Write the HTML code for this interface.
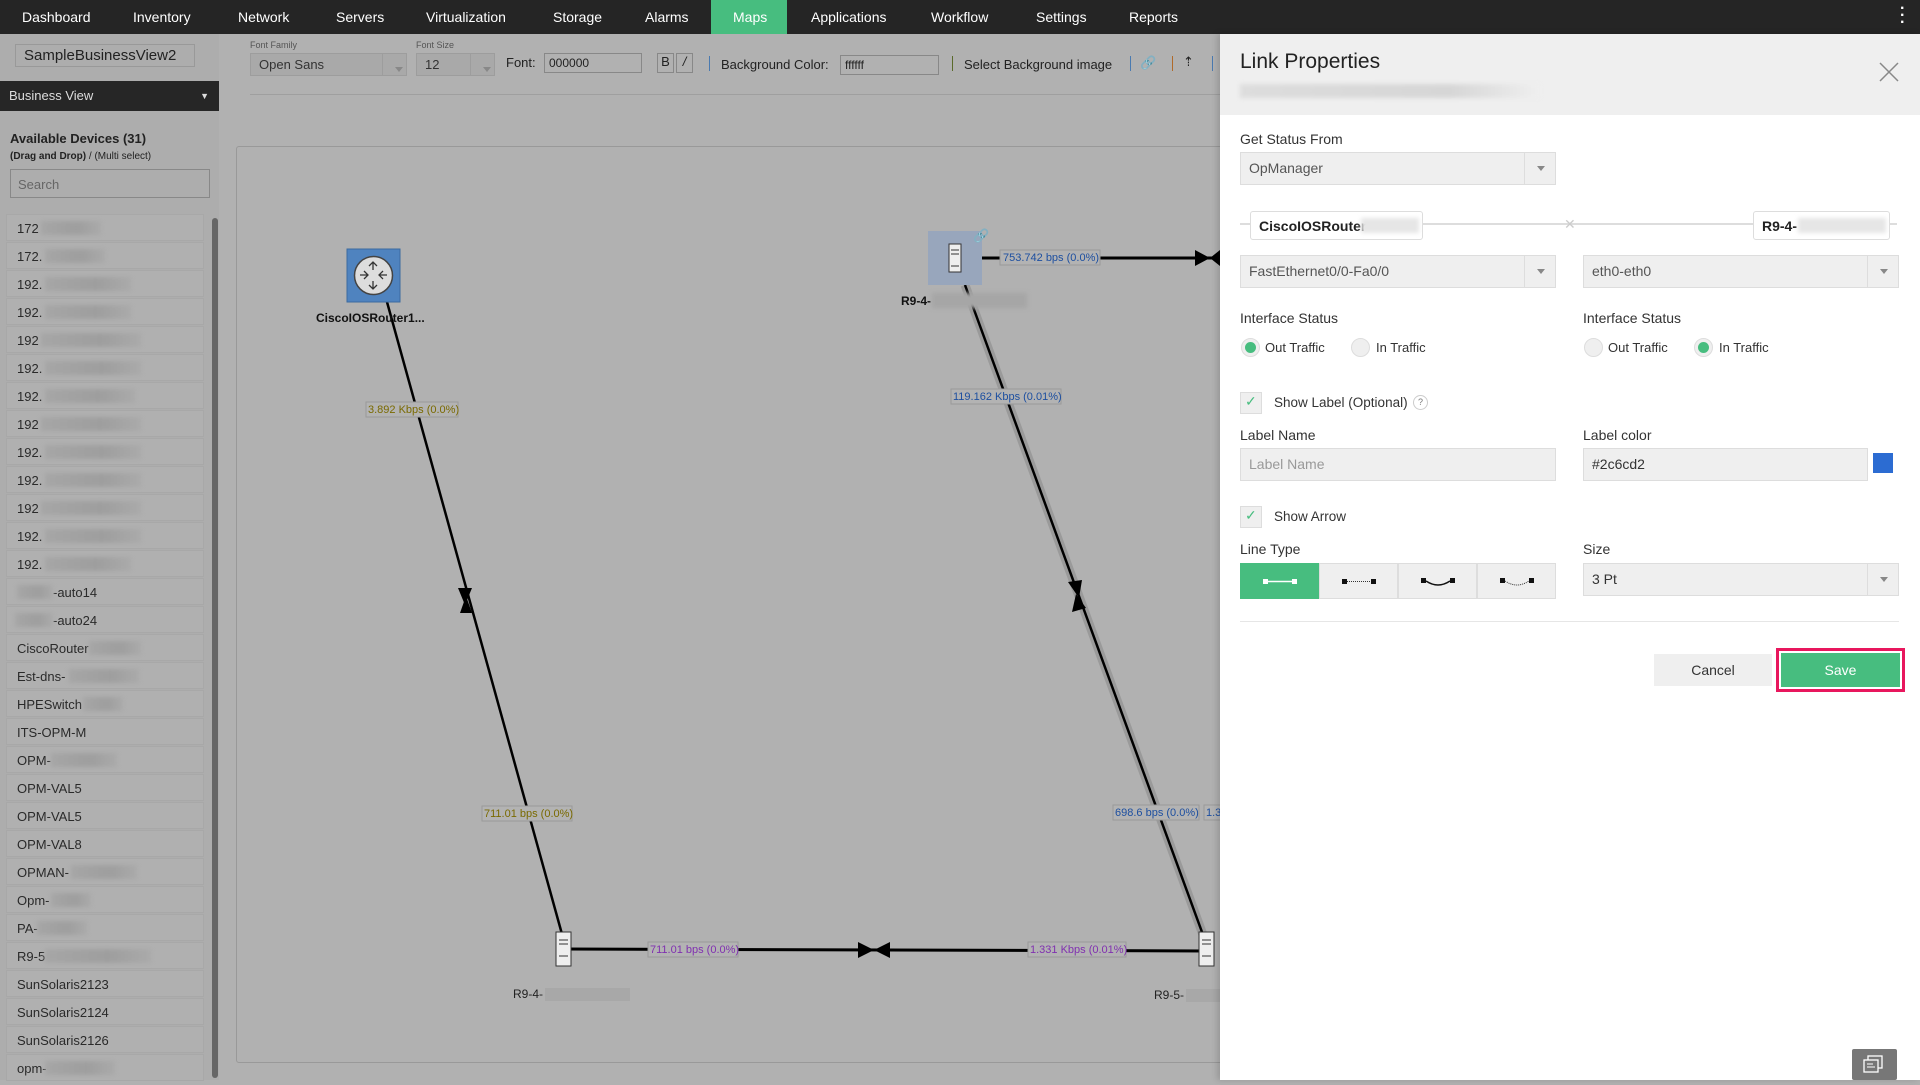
<!DOCTYPE html>
<html><head><meta charset="utf-8"><style>
*{margin:0;padding:0;box-sizing:border-box}
body{width:1920px;height:1080px;overflow:hidden;background:#b1b1b1;font-family:"Liberation Sans",sans-serif;position:relative;color:#222}
.a{position:absolute}
#nav{left:0;top:0;width:1920px;height:34px;background:#252525}
#nav span{position:absolute;top:9px;color:#fff;font-size:14px}
.blur{background:linear-gradient(90deg,#a6a6a6,#9e9e9e 60%,#aaa);filter:blur(2px)}
.li{position:absolute;left:6px;width:198px;height:27px;border:1px solid #a8a8a8;font-size:13px;color:#2a2a2a;padding:6px 0 0 10px;background:#b0b0b0}
.pl{position:absolute;font-size:14px;color:#333}
.sel{position:absolute;background:#efefef;border:1px solid #ddd;font-size:14px;color:#555;padding:7px 0 0 8px}
.sel i{position:absolute;right:0;top:0;bottom:0;width:31px;border-left:1px solid #ddd}
.sel i:after{content:"";position:absolute;left:12px;top:13px;border:4px solid transparent;border-top:5px solid #888}
.rad{position:absolute;width:19px;height:19px;border-radius:50%;background:#efefef;border:1px solid #ddd}
.rad.on:after{content:"";position:absolute;left:3px;top:3px;width:11px;height:11px;border-radius:50%;background:#47bd7f}
.chk{position:absolute;width:22px;height:22px;background:#efefef;border:1px solid #ddd}
.lt{position:absolute;top:563px;height:36px;width:79px;background:#efefef;border:1px solid #ddd}
</style></head><body>
<div id="nav" class="a">
<span style="left:22px">Dashboard</span><span style="left:133px">Inventory</span><span style="left:238px">Network</span><span style="left:336px">Servers</span><span style="left:426px">Virtualization</span><span style="left:553px">Storage</span><span style="left:645px">Alarms</span>
<div class="a" style="left:711px;top:0;width:76px;height:34px;background:#47bd7f"></div><span style="left:733px">Maps</span>
<span style="left:811px">Applications</span><span style="left:931px">Workflow</span><span style="left:1036px">Settings</span><span style="left:1129px">Reports</span>
<span style="left:1900px;top:5px;font-weight:bold;line-height:7px;font-size:16px">·<br>·<br>·</span>
</div>
<!-- sidebar -->
<div class="a" style="left:0;top:34px;width:219px;height:1046px;background:#adadad"></div>
<div class="a" style="left:15px;top:44px;width:180px;height:23px;border:1px solid #999;font-size:15px;padding:2px 0 0 8px;color:#222">SampleBusinessView2</div>
<div class="a" style="left:0;top:81px;width:219px;height:30px;background:#262626;color:#ddd;font-size:13px;padding:7px 0 0 9px">Business View<span style="position:absolute;right:10px;font-size:9px;top:10px">▼</span></div>
<div class="a" style="left:10px;top:131px;font-size:13px;font-weight:bold;color:#222">Available Devices (31)</div>
<div class="a" style="left:10px;top:151px;font-size:10px;color:#222"><b>(Drag and Drop)</b> / (Multi select)</div>
<div class="a" style="left:10px;top:169px;width:200px;height:29px;border:1px solid #888;font-size:13px;color:#666;padding:7px 0 0 7px">Search</div>
<div class="a" style="left:212px;top:218px;width:6px;height:860px;background:#666;border-radius:3px"></div>
<div class="li" style="top:214px">172<span class="blur a" style="left:34px;top:6px;width:60px;height:14px"></span></div>
<div class="li" style="top:242px">172.<span class="blur a" style="left:38px;top:6px;width:60px;height:14px"></span></div>
<div class="li" style="top:270px">192.<span class="blur a" style="left:38px;top:6px;width:86px;height:14px"></span></div>
<div class="li" style="top:298px">192.<span class="blur a" style="left:38px;top:6px;width:86px;height:14px"></span></div>
<div class="li" style="top:326px">192<span class="blur a" style="left:34px;top:6px;width:100px;height:14px"></span></div>
<div class="li" style="top:354px">192.<span class="blur a" style="left:38px;top:6px;width:96px;height:14px"></span></div>
<div class="li" style="top:382px">192.<span class="blur a" style="left:38px;top:6px;width:90px;height:14px"></span></div>
<div class="li" style="top:410px">192<span class="blur a" style="left:34px;top:6px;width:100px;height:14px"></span></div>
<div class="li" style="top:438px">192.<span class="blur a" style="left:38px;top:6px;width:96px;height:14px"></span></div>
<div class="li" style="top:466px">192.<span class="blur a" style="left:38px;top:6px;width:96px;height:14px"></span></div>
<div class="li" style="top:494px">192<span class="blur a" style="left:34px;top:6px;width:100px;height:14px"></span></div>
<div class="li" style="top:522px">192.<span class="blur a" style="left:38px;top:6px;width:96px;height:14px"></span></div>
<div class="li" style="top:550px">192.<span class="blur a" style="left:38px;top:6px;width:86px;height:14px"></span></div>
<div class="li" style="top:578px;padding-left:46px"><span class="blur a" style="left:10px;top:6px;width:36px;height:14px"></span>-auto14</div>
<div class="li" style="top:606px;padding-left:46px"><span class="blur a" style="left:8px;top:6px;width:38px;height:14px"></span>-auto24</div>
<div class="li" style="top:634px">CiscoRouter<span class="blur a" style="left:82px;top:6px;width:52px;height:14px"></span></div>
<div class="li" style="top:662px">Est-dns-<span class="blur a" style="left:62px;top:6px;width:70px;height:14px"></span></div>
<div class="li" style="top:690px">HPESwitch<span class="blur a" style="left:76px;top:6px;width:40px;height:14px"></span></div>
<div class="li" style="top:718px">ITS-OPM-M</div>
<div class="li" style="top:746px">OPM-<span class="blur a" style="left:44px;top:6px;width:66px;height:14px"></span></div>
<div class="li" style="top:774px">OPM-VAL5</div>
<div class="li" style="top:802px">OPM-VAL5</div>
<div class="li" style="top:830px">OPM-VAL8</div>
<div class="li" style="top:858px">OPMAN-<span class="blur a" style="left:64px;top:6px;width:66px;height:14px"></span></div>
<div class="li" style="top:886px">Opm-<span class="blur a" style="left:44px;top:6px;width:40px;height:14px"></span></div>
<div class="li" style="top:914px">PA-<span class="blur a" style="left:30px;top:6px;width:50px;height:14px"></span></div>
<div class="li" style="top:942px">R9-5<span class="blur a" style="left:38px;top:6px;width:106px;height:14px"></span></div>
<div class="li" style="top:970px">SunSolaris2123</div>
<div class="li" style="top:998px">SunSolaris2124</div>
<div class="li" style="top:1026px">SunSolaris2126</div>
<div class="li" style="top:1054px">opm-<span class="blur a" style="left:38px;top:6px;width:70px;height:14px"></span></div>
<!-- toolbar -->
<div class="a" style="left:250px;top:40px;font-size:9px;color:#555">Font Family</div>
<div class="a" style="left:416px;top:40px;font-size:9px;color:#555">Font Size</div>
<div class="sel" style="left:250px;top:53px;width:157px;height:23px;background:#a9a9a9;border-color:#9d9d9d;padding:3px 0 0 8px;font-size:13px;color:#333">Open Sans<i style="width:24px;border-color:#9d9d9d"></i></div>
<div class="sel" style="left:416px;top:53px;width:79px;height:23px;background:#a9a9a9;border-color:#9d9d9d;padding:3px 0 0 8px;font-size:13px;color:#333">12<i style="width:24px;border-color:#9d9d9d"></i></div>
<div class="a" style="left:506px;top:55px;font-size:13px">Font:</div>
<div class="a" style="left:544px;top:53px;width:98px;height:20px;border:1px solid #888;font-size:12px;padding:2px 4px">000000</div>
<div class="a" style="left:657px;top:53px;width:17px;height:20px;border:1px solid #888;font-size:13px;text-align:center">B</div>
<div class="a" style="left:676px;top:53px;width:17px;height:20px;border:1px solid #888;font-size:13px;text-align:center;font-style:italic">/</div>
<div class="a" style="left:709px;top:56px;width:1px;height:15px;background:#4a7ab0"></div>
<div class="a" style="left:721px;top:57px;font-size:13px">Background Color:</div>
<div class="a" style="left:840px;top:55px;width:99px;height:20px;border:1px solid #888;font-size:12px;padding:2px 4px">ffffff</div>
<div class="a" style="left:952px;top:56px;width:1px;height:15px;background:#5a6a2a"></div>
<div class="a" style="left:964px;top:57px;font-size:13px">Select Background image</div>
<div class="a" style="left:1130px;top:56px;width:1px;height:15px;background:#4a7ab0"></div>
<div class="a" style="left:1140px;top:55px;font-size:13px">🔗</div>
<div class="a" style="left:1172px;top:56px;width:1px;height:15px;background:#b06a2a"></div>
<div class="a" style="left:1183px;top:54px;font-size:13px">⇡</div>
<div class="a" style="left:1212px;top:56px;width:1px;height:15px;background:#4a7ab0"></div>
<div class="a" style="left:250px;top:94px;width:970px;height:1px;background:#9f9f9f"></div>
<!-- map -->
<div class="a" style="left:236px;top:146px;width:1000px;height:917px;border:1px solid #999;border-radius:3px"></div>
<svg class="a" style="left:0;top:0" width="1220" height="1080">
<g font-family="Liberation Sans" font-size="11">
<line x1="965" y1="285" x2="1206" y2="943" stroke="#9a9a9a" stroke-width="9"/>
<line x1="387" y1="302" x2="565" y2="945" stroke="#000" stroke-width="2.5"/>
<line x1="965" y1="285" x2="1206" y2="943" stroke="#000" stroke-width="2.5"/>
<line x1="982" y1="258" x2="1220" y2="258" stroke="#000" stroke-width="3"/>
<line x1="565" y1="949" x2="1207" y2="951" stroke="#000" stroke-width="3"/>
<polygon points="458,588 472,588 465,605" fill="#000"/><polygon points="460,613 472,613 466,596" fill="#000"/>
<polygon points="1068,582 1082,580 1079,598" fill="#000"/><polygon points="1072,612 1086,608 1076,594" fill="#000"/>
<polygon points="858,942 858,958 874,950" fill="#000"/><polygon points="890,942 890,958 874,950" fill="#000"/>
<polygon points="1195,250 1195,266 1210,258" fill="#000"/><polygon points="1220,250 1220,266 1210,258" fill="#000"/>
<rect x="347" y="249" width="53" height="53" fill="#4f83bf" stroke="#3b6aa0"/>
<circle cx="373.5" cy="275.5" r="19" fill="#ddd" stroke="#444" stroke-width="1.5"/>
<path d="M373 262v8M369 266l4-4 4 4M373 289v-8M369 285l4 4 4-4M360 275h8M364 271l4 4-4 4M387 275h-8M383 271l-4 4 4 4" stroke="#333" fill="none" stroke-width="1.3"/>
<text x="316" y="322" font-size="12" font-weight="bold" fill="#111">CiscoIOSRouter1...</text>
<rect x="928" y="231" width="54" height="54" fill="#98a6bc"/>
<rect x="949" y="244" width="12" height="28" fill="#eee" stroke="#333"/><path d="M951 250h8M951 254h8M951 266h8" stroke="#333"/>
<text x="973" y="240" font-size="13">🔗</text>
<text x="901" y="305" font-size="12" font-weight="bold" fill="#111">R9-4-</text>
<rect x="932" y="293" width="95" height="15" fill="#a6a6a6" filter="blur(2px)"/>
<rect x="556" y="932" width="15" height="34" fill="#eee" stroke="#333"/><path d="M559 940h9M559 944h9M559 956h9" stroke="#333"/>
<rect x="1199" y="932" width="15" height="34" fill="#eee" stroke="#333"/><path d="M1202 940h9M1202 944h9M1202 956h9" stroke="#333"/>
<text x="513" y="998" font-size="12" fill="#222">R9-4-</text><rect x="545" y="988" width="85" height="13" fill="#a8a8a8"/>
<text x="1154" y="999" font-size="12" fill="#222">R9-5-</text><rect x="1186" y="989" width="34" height="13" fill="#a8a8a8"/>
<g><rect x="366" y="402" width="92" height="15" fill="#b3b3b3" stroke="#999"/><text x="368" y="413" fill="#7a6a00">3.892 Kbps (0.0%)</text></g>
<g><rect x="482" y="806" width="90" height="15" fill="#b3b3b3" stroke="#999"/><text x="484" y="817" fill="#7a6a00">711.01 bps (0.0%)</text></g>
<g><rect x="648" y="942" width="90" height="15" fill="#b3b3b3" stroke="#999"/><text x="650" y="953" fill="#8030b0">711.01 bps (0.0%)</text></g>
<g><rect x="1028" y="942" width="98" height="15" fill="#b3b3b3" stroke="#999"/><text x="1030" y="953" fill="#8030b0">1.331 Kbps (0.01%)</text></g>
<g><rect x="1000" y="250" width="100" height="15" fill="#b3b3b3" stroke="#999"/><text x="1003" y="261" fill="#1d4fa0">753.742 bps (0.0%)</text></g>
<g><rect x="951" y="389" width="110" height="15" fill="#b3b3b3" stroke="#999"/><text x="953" y="400" fill="#1d4fa0">119.162 Kbps (0.01%)</text></g>
<g><rect x="1113" y="805" width="86" height="15" fill="#b3b3b3" stroke="#999"/><text x="1115" y="816" fill="#1d4fa0">698.6 bps (0.0%)</text></g>
<g><rect x="1204" y="805" width="20" height="15" fill="#b3b3b3" stroke="#999"/><text x="1206" y="816" fill="#1d4fa0">1.3</text></g>
</g></svg>
<!-- panel -->
<div class="a" style="left:1220px;top:34px;width:700px;height:1046px;background:#fff;box-shadow:-3px 0 6px rgba(0,0,0,.15)"></div>
<div class="a" style="left:1220px;top:34px;width:700px;height:81px;background:#efefef"></div>
<div class="a" style="left:1240px;top:50px;font-size:21px;color:#222">Link Properties</div>
<div class="a blur" style="left:1240px;top:84px;width:300px;height:14px;background:linear-gradient(90deg,#ddd,#d6d6d6 70%,#efefef)"></div>
<svg class="a" style="left:1879px;top:62px" width="20" height="20"><path d="M1 1L19 19M19 1L1 19" stroke="#888" stroke-width="1.5"/></svg>
<div class="pl" style="left:1240px;top:131px">Get Status From</div>
<div class="sel" style="left:1240px;top:152px;width:316px;height:33px">OpManager<i></i></div>
<div class="a" style="left:1240px;top:223px;width:657px;height:2px;background:#ddd"></div>
<div class="a" style="left:1564px;top:216px;font-size:14px;color:#ccc">✕</div>
<div class="a" style="left:1250px;top:211px;width:173px;height:29px;background:#fff;border:1px solid #ddd;border-radius:3px;font-size:14px;font-weight:bold;padding:6px 0 0 8px">CiscoIOSRouter<span class="a blur" style="left:110px;top:6px;width:58px;height:15px;background:#e6e6e6"></span></div>
<div class="a" style="left:1753px;top:211px;width:137px;height:29px;background:#fff;border:1px solid #ddd;border-radius:3px;font-size:14px;font-weight:bold;padding:6px 0 0 8px">R9-4-<span class="a blur" style="left:44px;top:6px;width:88px;height:15px;background:#e6e6e6"></span></div>
<div class="sel" style="left:1240px;top:255px;width:316px;height:33px">FastEthernet0/0-Fa0/0<i></i></div>
<div class="sel" style="left:1583px;top:255px;width:316px;height:33px">eth0-eth0<i></i></div>
<div class="pl" style="left:1240px;top:310px">Interface Status</div>
<div class="pl" style="left:1583px;top:310px">Interface Status</div>
<div class="rad on" style="left:1241px;top:338px"></div><div class="pl" style="left:1265px;top:340px;font-size:13px">Out Traffic</div>
<div class="rad" style="left:1351px;top:338px"></div><div class="pl" style="left:1376px;top:340px;font-size:13px">In Traffic</div>
<div class="rad" style="left:1584px;top:338px"></div><div class="pl" style="left:1608px;top:340px;font-size:13px">Out Traffic</div>
<div class="rad on" style="left:1694px;top:338px"></div><div class="pl" style="left:1719px;top:340px;font-size:13px">In Traffic</div>
<div class="chk" style="left:1240px;top:392px"></div><div class="a" style="left:1245px;top:393px;color:#47bd7f;font-size:14px">✓</div>
<div class="pl" style="left:1274px;top:395px;font-size:13.5px">Show Label (Optional)</div>
<div class="a" style="left:1413px;top:395px;width:15px;height:15px;border:1px solid #ccc;border-radius:50%;font-size:9px;text-align:center;color:#777;line-height:13px">?</div>
<div class="pl" style="left:1240px;top:427px">Label Name</div>
<div class="pl" style="left:1583px;top:427px">Label color</div>
<div class="sel" style="left:1240px;top:448px;width:316px;height:33px;color:#999">Label Name</div>
<div class="sel" style="left:1583px;top:448px;width:285px;height:33px;color:#333">#2c6cd2</div>
<div class="a" style="left:1873px;top:453px;width:20px;height:20px;background:#2c6cd2"></div>
<div class="chk" style="left:1240px;top:506px"></div><div class="a" style="left:1245px;top:507px;color:#47bd7f;font-size:14px">✓</div>
<div class="pl" style="left:1274px;top:509px;font-size:13.5px">Show Arrow</div>
<div class="pl" style="left:1240px;top:541px">Line Type</div>
<div class="pl" style="left:1583px;top:541px">Size</div>
<div class="lt" style="left:1240px;background:#47bd7f;border-color:#47bd7f"><svg width="79" height="36"><rect x="22" y="15" width="5" height="5" fill="#fff"/><rect x="51" y="15" width="5" height="5" fill="#fff"/><path d="M27 17.5h24" stroke="#fff" stroke-width="1.5"/></svg></div>
<div class="lt" style="left:1319px"><svg width="79" height="36"><rect x="22" y="15" width="5" height="5" fill="#111"/><rect x="51" y="15" width="5" height="5" fill="#111"/><path d="M27 17.5h24" stroke="#333" stroke-dasharray="1 1"/></svg></div>
<div class="lt" style="left:1398px"><svg width="79" height="36"><rect x="22" y="14" width="5" height="5" fill="#111"/><rect x="51" y="14" width="5" height="5" fill="#111"/><path d="M27 17q12 8 24 0" stroke="#111" stroke-width="1.5" fill="none"/></svg></div>
<div class="lt" style="left:1477px"><svg width="79" height="36"><rect x="22" y="14" width="5" height="5" fill="#111"/><rect x="51" y="14" width="5" height="5" fill="#111"/><path d="M27 17q12 8 24 0" stroke="#333" stroke-dasharray="1 1" fill="none"/></svg></div>
<div class="sel" style="left:1583px;top:563px;width:316px;height:33px;color:#333">3 Pt<i></i></div>
<div class="a" style="left:1240px;top:621px;width:659px;height:1px;background:#e6e6e6"></div>
<div class="a" style="left:1654px;top:654px;width:118px;height:32px;background:#efefef;font-size:14px;text-align:center;padding-top:8px;color:#333">Cancel</div>
<div class="a" style="left:1776px;top:648px;width:129px;height:44px;border:3px solid #e8175d"></div>
<div class="a" style="left:1781px;top:653px;width:119px;height:34px;background:#47bd7f;font-size:14px;text-align:center;padding-top:9px;color:#fff">Save</div>
<div class="a" style="left:1852px;top:1049px;width:45px;height:31px;background:#777;border-radius:2px"><svg width="45" height="31"><rect x="16" y="7" width="14" height="12" fill="none" stroke="#fff" stroke-width="1.3"/><rect x="12" y="11" width="14" height="12" fill="#777" stroke="#fff" stroke-width="1.3"/><path d="M15 15h6M15 18h8" stroke="#fff"/></svg></div>
</body></html>
